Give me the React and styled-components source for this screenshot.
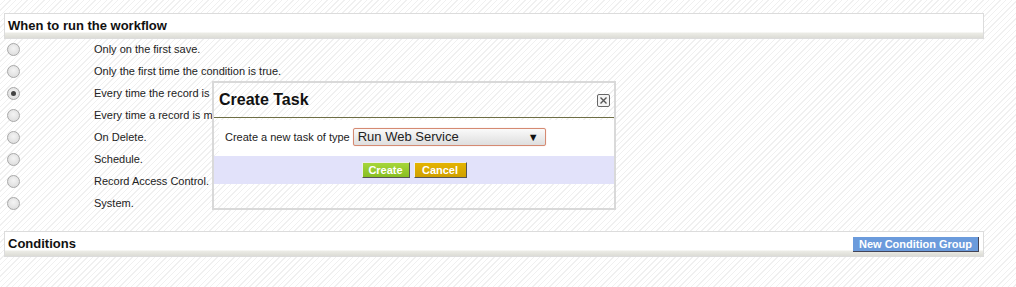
import styled, { createGlobalStyle } from "styled-components";

const stripes = `repeating-linear-gradient(
  135deg,
  #fff 0px,
  #fff 3px,
  #f0f0f0 3px,
  #f0f0f0 4px
)`;

const GlobalStyle = createGlobalStyle`
  html, body {
    margin: 0;
    padding: 0;
  }
  body {
    font-family: "Liberation Sans", Arial, sans-serif;
    font-size: 11px;
    color: #222;
    background-color: #fff;
    background-image: ${stripes};
    min-height: 287px;
  }
`;

const options = [
  { label: "Only on the first save.", checked: false },
  { label: "Only the first time the condition is true.", checked: false },
  { label: "Every time the record is saved.", checked: true },
  { label: "Every time a record is modified.", checked: false },
  { label: "On Delete.", checked: false },
  { label: "Schedule.", checked: false },
  { label: "Record Access Control.", checked: false },
  { label: "System.", checked: false },
];

const App = () => {
  return (
    <Page>
      <GlobalStyle />
      <SectionHeader>
        <HeaderTitle>When to run the workflow</HeaderTitle>
      </SectionHeader>

      <OptionList>
        {options.map((opt) => (
          <OptionRow key={opt.label}>
            <RadioCell>
              <Radio $checked={opt.checked} />
            </RadioCell>
            <OptionLabel>{opt.label}</OptionLabel>
          </OptionRow>
        ))}
      </OptionList>

      <SectionHeader $spaced>
        <HeaderTitle>Conditions</HeaderTitle>
        <BlueButton>New Condition Group</BlueButton>
      </SectionHeader>

      <Dialog>
        <DialogTitleBar>
          <DialogTitle>Create Task</DialogTitle>
          <CloseBox>
            <svg width="9" height="9" viewBox="0 0 9 9">
              <path d="M1.5 1.5 L7.5 7.5 M7.5 1.5 L1.5 7.5" stroke="#555" strokeWidth="1.4" />
            </svg>
          </CloseBox>
        </DialogTitleBar>
        <DialogContent>
          <span>Create a new task of type</span>
          <SelectBox>
            <span>Run Web Service</span>
            <Arrow>▼</Arrow>
          </SelectBox>
        </DialogContent>
        <DialogButtons>
          <ActionButton $tone="green">Create</ActionButton>
          <ActionButton $tone="yellow">Cancel</ActionButton>
        </DialogButtons>
      </Dialog>
    </Page>
  );
};

export default App;

const Page = styled.div`
  position: relative;
  padding: 13px 32px 0 4px;
`;

const SectionHeader = styled.div`
  display: flex;
  align-items: center;
  justify-content: space-between;
  box-sizing: border-box;
  height: 26px;
  margin-top: ${(p) => (p.$spaced ? "17px" : "0")};
  padding: 0 4px 2px 3px;
  border: 1px solid #dcdcdc;
  background: linear-gradient(
    to bottom,
    #fff 0px,
    #fff 18px,
    #ecece6 19px,
    #dcdcd6 24px
  );
`;

const HeaderTitle = styled.h3`
  margin: 0;
  font-size: 13px;
  font-weight: bold;
  color: #111;
`;

const BlueButton = styled.button`
  font-family: "Liberation Sans", Arial, sans-serif;
  font-size: 11px;
  font-weight: bold;
  color: #fff;
  height: 15px;
  padding: 0 6px;
  margin-top: 2px;
  background: #6b9bdc;
  border: none;
  border-right: 1px solid #445;
  border-bottom: 1px solid #445;
  line-height: 14px;
`;

const OptionList = styled.div`
  display: flex;
  flex-direction: column;
  margin-top: -1px;
`;

const OptionRow = styled.div`
  display: grid;
  grid-template-columns: 90px 1fr;
  align-items: center;
  height: 22px;
`;

const RadioCell = styled.div`
  display: flex;
  align-items: center;
  padding-left: 3px;
`;

const Radio = styled.span`
  position: relative;
  display: block;
  width: 11px;
  height: 11px;
  border-radius: 50%;
  border: 1px solid #a8a8a8;
  background: radial-gradient(circle at 50% 40%, #f4f4f4 0%, #d8d8d8 100%);

  &::after {
    content: "";
    display: ${(p) => (p.$checked ? "block" : "none")};
    position: absolute;
    left: 3px;
    top: 3px;
    width: 5px;
    height: 5px;
    border-radius: 50%;
    background: #444;
  }
`;

const OptionLabel = styled.span`
  font-size: 11px;
  color: #222;
`;

const Dialog = styled.div`
  position: absolute;
  left: 212px;
  top: 81px;
  width: 404px;
  height: 129px;
  box-sizing: border-box;
  border: 2px solid #d9d9d9;
  display: flex;
  flex-direction: column;
  background-color: #fff;
  background-image: ${stripes};
`;

const DialogTitleBar = styled.div`
  display: flex;
  align-items: center;
  justify-content: space-between;
  height: 34px;
  padding: 0 4px 0 5px;
  border-bottom: 1px solid #6e6e44;
`;

const DialogTitle = styled.h2`
  margin: 0;
  font-size: 16px;
  font-weight: bold;
  color: #111;
`;

const CloseBox = styled.span`
  display: flex;
  align-items: center;
  justify-content: center;
  width: 11px;
  height: 11px;
  border: 1px solid #666;
  border-radius: 2px;
  background: #f4f4f4;
`;

const DialogContent = styled.div`
  display: flex;
  align-items: flex-start;
  gap: 3px;
  box-sizing: border-box;
  height: 36px;
  margin: 2px 0 0 5px;
  padding: 8px 0 0 6px;
  background: #fff;
  font-size: 11px;
  line-height: 18px;
  color: #222;
`;

const SelectBox = styled.div`
  display: flex;
  align-items: center;
  justify-content: space-between;
  box-sizing: border-box;
  width: 193px;
  height: 18px;
  padding: 0 6px 0 4px;
  border: 1px solid #d58a72;
  border-radius: 2px;
  box-shadow: 0 0 1px #e8b0a0;
  background: linear-gradient(to bottom, #fafafa, #dedede);
  font-size: 13px;
  color: #222;
`;

const Arrow = styled.span`
  font-size: 11px;
  color: #111;
`;

const DialogButtons = styled.div`
  display: flex;
  justify-content: center;
  align-items: flex-start;
  gap: 4px;
  box-sizing: border-box;
  height: 28px;
  padding-top: 6px;
  background: #e2e2fa;
`;

const ActionButton = styled.button`
  font-family: "Liberation Sans", Arial, sans-serif;
  font-size: 11px;
  font-weight: bold;
  color: #fff;
  height: 16px;
  padding: 0 4px;
  line-height: 13px;
  border: 1px solid;
  border-color: #eee #555 #555 #eee;
  background: ${(p) =>
    p.$tone === "green"
      ? "linear-gradient(to bottom, #a6d63a, #88bf22)"
      : "linear-gradient(to bottom, #e4b400, #d0a000)"};
  width: ${(p) => (p.$tone === "green" ? "48px" : "53px")};
`;
